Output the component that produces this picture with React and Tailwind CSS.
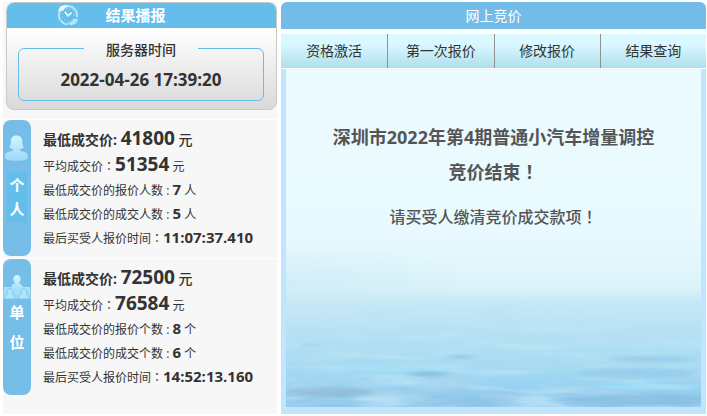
import React, { useState } from 'react';

// ─────────────────────────────────────────────────────────────
//  DATA
// ─────────────────────────────────────────────────────────────

const TABS = ['资格激活', '第一次报价', '修改报价', '结果查询'];

const RESULTS = [
  {
    id: 'personal',
    label: ['个', '人'],
    unit: '人',
    lowest: '41800',
    average: '51354',
    bidders: '7',
    winners: '5',
    lastTime: '11:07:37.410',
  },
  {
    id: 'company',
    label: ['单', '位'],
    unit: '个',
    lowest: '72500',
    average: '76584',
    bidders: '8',
    winners: '6',
    lastTime: '14:52:13.160',
  },
];

// full-width punctuation is centred in its box only in the TC face
function Mark({ children }) {
  return <span className="font-['Noto_Sans_CJK_TC',sans-serif]">{children}</span>;
}

// ─────────────────────────────────────────────────────────────
//  DRAWINGS
// ─────────────────────────────────────────────────────────────

function ClockIcon() {
  return (
    <svg viewBox="0 0 24 24" className="w-6 h-6" fill="none" stroke="#b4e5f9" aria-hidden="true">
      <path d="M4.2 17A9 9 0 0 1 4.4 7.5M10.5 3.2A9.2 9.2 0 0 1 20.8 14.5M12 21.4A9.2 9.2 0 0 1 4.6 17.2" strokeWidth="2" />
      <path d="M1.8 8.2 4.2 3.4 9.2 1.8 12.4 3.6 8.4 5.8 6.8 7.8Z" fill="#e6f8ff" stroke="none" />
      <path d="M22.3 16 20 20.6 15 22.4 11.4 20.2 15.8 18.2 17.4 16Z" fill="#b4e5f9" stroke="none" />
      <circle cx="12.3" cy="12" r="6.4" strokeWidth="1" strokeDasharray="1 2.4" />
      <path d="M8.8 8.8 12 12.8 15.6 9.6" stroke="#eafaff" strokeWidth="1.6" />
    </svg>
  );
}

function PersonIcon() {
  return (
    <svg viewBox="0 0 28 30" className="w-7 h-[30px] block" aria-hidden="true">
      <defs>
        <linearGradient id="person" x1="0" y1="0" x2="0" y2="1">
          <stop offset="0" stopColor="#d2f4ff" />
          <stop offset="1" stopColor="#9bdaf5" />
        </linearGradient>
      </defs>
      <path
        fill="url(#person)"
        d="M13.5 1.5C9.6 1.5 7.6 4.2 7.8 7.8C8 10.6 7 12 6.3 13.6C7.6 15 9.6 15.2 10.6 15.4C10.2 16.8 8.4 17.2 5.8 17.8C3 18.6 2 20.4 2 23C2 25.4 4.4 26.8 13.5 26.8C22.6 26.8 25 25.4 25 23C25 20.4 24 18.6 21.2 17.8C18.6 17.2 16.8 16.8 16.4 15.4C17.6 15.2 19.6 15 20.8 13.6C20 12 19.2 10.6 19.2 7.8C19.4 4.2 17.4 1.5 13.5 1.5Z"
      />
    </svg>
  );
}

function GroupIcon() {
  return (
    <svg viewBox="0 0 28 30" className="w-7 h-[30px] block" aria-hidden="true">
      <defs>
        <linearGradient id="group" x1="0" y1="0" x2="0" y2="30" gradientUnits="userSpaceOnUse">
          <stop offset="0.05" stopColor="#d8f6ff" />
          <stop offset="0.5" stopColor="#a8e2f9" />
          <stop offset="1" stopColor="#92d2f4" />
        </linearGradient>
      </defs>
      <path fill="url(#group)" d="M1 14H27L28 26H0Z" />
      <path
        fill="url(#group)"
        d="M14 2A3.6 4 0 0 0 10.8 8C11.2 9.4 12 9.6 12 10.2C10 10.8 8.4 11.4 8.4 14H19.6C19.6 11.4 18 10.8 16 10.2C16 9.6 16.8 9.4 17.2 8A3.6 4 0 0 0 14 2Z"
      />
      <g fill="#aee4fa" stroke="#7cc4ec" strokeWidth="0.8">
        <path d="M7 15.4A3.3 3.6 0 0 0 4.4 20.8C4.8 22 1.8 22.4 1.4 26H12.6C12.2 22.4 9.2 22 9.6 20.8A3.3 3.6 0 0 0 7 15.4Z" />
        <path d="M21 15.4A3.3 3.6 0 0 0 18.4 20.8C18.8 22 15.8 22.4 15.4 26H26.6C26.2 22.4 23.2 22 23.6 20.8A3.3 3.6 0 0 0 21 15.4Z" />
      </g>
    </svg>
  );
}

function Sea() {
  return (
    <svg
      viewBox="0 0 415 338"
      preserveAspectRatio="none"
      className="absolute inset-0 w-full h-full"
      aria-hidden="true"
    >
      <defs>
        <linearGradient id="sky" x1="0" y1="0" x2="0" y2="1">
          <stop offset="0" stopColor="#ebfbff" />
          <stop offset="0.45" stopColor="#e9faff" />
          <stop offset="0.6" stopColor="#e0f5fb" />
          <stop offset="0.65" stopColor="#d9f2fa" />
          <stop offset="0.69" stopColor="#c7e8f5" />
          <stop offset="0.8" stopColor="#b4e0f3" />
          <stop offset="0.9" stopColor="#a2d8f2" />
          <stop offset="1" stopColor="#8dc6e9" />
        </linearGradient>
        <linearGradient id="fade" x1="0" y1="0" x2="0" y2="1">
          <stop offset="0" stopColor="#fff" stopOpacity="0" />
          <stop offset="0.4" stopColor="#fff" stopOpacity="0.3" />
          <stop offset="1" stopColor="#fff" stopOpacity="0.7" />
        </linearGradient>
        <radialGradient id="haze">
          <stop offset="0" stopColor="#c9eaf6" stopOpacity="0.6" />
          <stop offset="1" stopColor="#c9eaf6" stopOpacity="0" />
        </radialGradient>
        <mask id="seaMask">
          <rect x="0" y="228" width="415" height="110" fill="url(#fade)" />
        </mask>
        <filter id="dark" x="0" y="0" width="100%" height="100%">
          <feTurbulence type="fractalNoise" baseFrequency="0.016 0.11" numOctaves="3" seed="7" />
          <feColorMatrix values="0 0 0 0 0.46  0 0 0 0 0.69  0 0 0 0 0.86  2.6 0 0 0 -1.15" />
        </filter>
        <filter id="light" x="0" y="0" width="100%" height="100%">
          <feTurbulence type="fractalNoise" baseFrequency="0.014 0.11" numOctaves="3" seed="21" />
          <feColorMatrix values="0 0 0 0 0.62  0 0 0 0 0.88  0 0 0 0 0.98  2.6 0 0 0 -1.1" />
        </filter>
        <filter id="soft" x="-20%" y="-100%" width="140%" height="300%">
          <feGaussianBlur stdDeviation="6 1.6" />
        </filter>
      </defs>
      <rect width="415" height="338" fill="url(#sky)" />
      <ellipse cx="0" cy="215" rx="190" ry="40" fill="url(#haze)" />
      <g mask="url(#seaMask)">
        <rect y="228" width="415" height="110" filter="url(#light)" />
        <rect y="228" width="415" height="110" filter="url(#dark)" />
      </g>
      <g filter="url(#soft)">
        <ellipse cx="42" cy="323" rx="46" ry="5" fill="#83b3cd" opacity="0.6" />
        <ellipse cx="142" cy="305" rx="20" ry="3" fill="#7fb4d3" opacity="0.6" />
        <ellipse cx="175" cy="288" rx="14" ry="2" fill="#86b9d8" opacity="0.5" />
        <ellipse cx="25" cy="276" rx="8" ry="1" fill="#86b9d8" opacity="0.6" />
        <ellipse cx="100" cy="299" rx="70" ry="3" fill="#a6e2f8" opacity="0.7" />
        <ellipse cx="170" cy="332" rx="60" ry="5" fill="#88c0e4" opacity="0.5" />
        <ellipse cx="245" cy="312" rx="50" ry="8" fill="#97d3f3" opacity="0.6" />
        <ellipse cx="365" cy="290" rx="44" ry="3" fill="#8fc6e8" opacity="0.6" />
        <ellipse cx="350" cy="304" rx="60" ry="5" fill="#8cc5e9" opacity="0.5" />
        <ellipse cx="350" cy="331" rx="80" ry="6" fill="#80b8dd" opacity="0.5" />
        <ellipse cx="360" cy="318" rx="55" ry="2" fill="#a0e2fb" />
        <ellipse cx="340" cy="282" rx="60" ry="2" fill="#a9e0f5" />
      </g>
    </svg>
  );
}

// ─────────────────────────────────────────────────────────────
//  LEFT PANEL
// ─────────────────────────────────────────────────────────────

function ServerTime() {
  return (
    <div className="ml-[3px] rounded-lg border border-[#c9c9c9] bg-linear-to-b from-white from-25% to-[#d9d9d9] overflow-hidden">
      <h2 className="relative h-[25px] flex items-center justify-center bg-[#64beeb] text-white text-[15px] font-bold pr-3">
        <span className="absolute left-[49px] top-0">
          <ClockIcon />
        </span>
        结果播报
      </h2>
      <fieldset className="ml-[11px] mr-3 mt-2 mb-2 rounded-md border border-[#64beeb] pb-2 text-center">
        <legend className="mx-auto w-[114px] pt-1 text-sm leading-5 font-medium">服务器时间</legend>
        <time className="mt-2 block text-[17px] leading-6 font-bold">2022-04-26 17:39:20</time>
      </fieldset>
    </div>
  );
}

function ResultBlock({ item }) {
  const personal = item.id === 'personal';

  return (
    <section className="flex border-t border-white">
      <div className="w-7 h-[136px] shrink-0 rounded-lg bg-[#76bde8] flex flex-col items-center text-white text-[15px] font-bold">
        <div className={personal ? 'pt-[14px]' : 'pt-3.5'}>
          {personal ? <PersonIcon /> : <GroupIcon />}
        </div>
        <div className={personal ? 'mt-2 w-5 py-px bg-[#64beeb] text-center leading-6' : 'w-5 -mt-1.5 text-center leading-[30px]'}>
          {item.label.map(c => <div key={c}>{c}</div>)}
        </div>
      </div>
      <div className="pl-3 pt-[5px] text-xs whitespace-nowrap">
        <p className="h-[26px] leading-[26px] text-sm font-bold">
          最低成交价: <span className="text-[19px]">{item.lowest}</span> <span className="font-medium">元</span>
        </p>
        <p className="h-[26px] leading-[26px]">
          平均成交价<Mark>：</Mark><span className="text-[19px] font-bold">{item.average}</span> 元
        </p>
        <p className="h-6 leading-6">
          最低成交价的报价{item.unit}数 : <span className="text-[15px] font-bold">{item.bidders}</span> {item.unit}
        </p>
        <p className="h-6 leading-6">
          最低成交价的成交{item.unit}数 : <span className="text-[15px] font-bold">{item.winners}</span> {item.unit}
        </p>
        <p className="h-6 leading-6">
          最后买受人报价时间<Mark>：</Mark><span className="text-[15px] font-bold">{item.lastTime}</span>
        </p>
      </div>
    </section>
  );
}

// ─────────────────────────────────────────────────────────────
//  PAGE
// ─────────────────────────────────────────────────────────────

export default function App() {
  const [active, setActive] = useState(null);

  return (
    <div className="flex gap-1 bg-white pl-[3px] pr-px py-0.5 text-[#333] font-['Open_Sans','Noto_Sans_CJK_SC',sans-serif]">
      <aside className="w-[274px] shrink-0 bg-[#f7f7f7] pb-[19px]">
        <ServerTime />
        <div className="mt-[9px] flex flex-col gap-0.5">
          {RESULTS.map(item => <ResultBlock key={item.id} item={item} />)}
        </div>
      </aside>

      <main className="flex-1 min-w-0 flex flex-col">
        <h1 className="h-[27px] flex items-center justify-center rounded-t-md bg-[#74bce8] text-white text-sm">
          网上竞价
        </h1>
        <nav className="mt-[5px] grid grid-cols-4">
          {TABS.map(tab => (
            <button
              key={tab}
              onClick={() => setActive(tab)}
              aria-pressed={active === tab}
              className="h-[34px] border-l border-[#909090] first:border-l-0 bg-linear-to-b from-[#d9f8ff] from-30% to-[#aedfec] text-sm cursor-pointer"
            >
              {tab}
            </button>
          ))}
        </nav>
        <div className="mt-px flex-1 flex flex-col border-[5px] border-t-0 border-b-[7px] border-[#bfe5ff]">
          <div className="relative flex-1 overflow-hidden text-center text-[#555]">
            <Sea />
            <div className="relative pt-[51px]">
              <p className="text-lg leading-[34px] font-bold">
                深圳市2022年第4期普通小汽车增量调控
                <br />
                竞价结束<Mark>！</Mark>
              </p>
              <p className="mt-2.5 text-base leading-[34px] font-medium">
                请买受人缴清竞价成交款项<Mark>！</Mark>
              </p>
            </div>
          </div>
        </div>
      </main>
    </div>
  );
}
